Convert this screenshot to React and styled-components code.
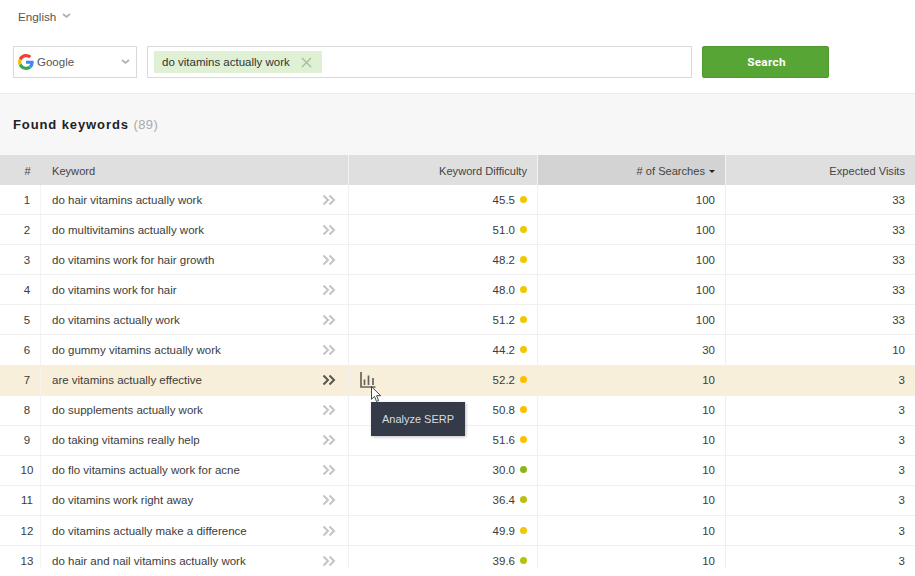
import React from 'react';
import styled, { createGlobalStyle } from 'styled-components';

const ROWS = [
  [1, 'do hair vitamins actually work', '45.5', 100, 33, 'y'],
  [2, 'do multivitamins actually work', '51.0', 100, 33, 'y'],
  [3, 'do vitamins work for hair growth', '48.2', 100, 33, 'y'],
  [4, 'do vitamins work for hair', '48.0', 100, 33, 'y'],
  [5, 'do vitamins actually work', '51.2', 100, 33, 'y'],
  [6, 'do gummy vitamins actually work', '44.2', 30, 10, 'y'],
  [7, 'are vitamins actually effective', '52.2', 10, 3, 'o'],
  [8, 'do supplements actually work', '50.8', 10, 3, 'o'],
  [9, 'do taking vitamins really help', '51.6', 10, 3, 'o'],
  [10, 'do flo vitamins actually work for acne', '30.0', 10, 3, 'g'],
  [11, 'do vitamins work right away', '36.4', 10, 3, 'l'],
  [12, 'do vitamins actually make a difference', '49.9', 10, 3, 'y'],
  [13, 'do hair and nail vitamins actually work', '39.6', 10, 3, 'l'],
];

const DOTS = { y: '#f0c800', o: '#fcc000', g: '#8fb31a', l: '#b8c010' };

function Chevron() {
  return (
    <svg width="9" height="6" viewBox="0 0 9 6">
      <path d="M1 1l3.5 3L8 1" fill="none" stroke="#b0b0b0" strokeWidth="1.7" />
    </svg>
  );
}

function GoogleLogo() {
  return (
    <svg width="16" height="16" viewBox="0 0 48 48">
      <path fill="#EA4335" d="M24 9.5c3.5 0 6.700 1.200 9.200 3.600l6.900-6.900C35.900 2.400 30.500 0 24 0 14.600 0 6.500 5.400 2.600 13.200l8 6.200C12.400 13.700 17.700 9.500 24 9.500z" />
      <path fill="#4285F4" d="M47 24.500c0-1.600-.1-3.100-.4-4.500H24v9h12.900c-.6 3-2.300 5.500-4.800 7.200l7.700 6C44.300 38 47 31.800 47 24.500z" />
      <path fill="#FBBC05" d="M10.600 28.600c-.5-1.400-.8-3-.8-4.600s.3-3.200.8-4.600l-8-6.200C.9 16.500 0 20.100 0 24s.9 7.500 2.600 10.800l8-6.200z" />
      <path fill="#34A853" d="M24 48c6.500 0 11.900-2.100 15.800-5.800l-7.700-6c-2.100 1.400-4.900 2.300-8.100 2.300-6.300 0-11.600-4.200-13.400-9.900l-8 6.200C6.500 42.600 14.600 48 24 48z" />
    </svg>
  );
}

function DoubleArrow({ active }) {
  return (
    <svg width="14" height="12" viewBox="0 0 14 12">
      <path
        d="M1.500 1.500L6 6l-4.500 4.500M7.500 1.500L12 6l-4.500 4.500"
        fill="none"
        stroke={active ? '#55544e' : '#c4c4c4'}
        strokeWidth="2"
      />
    </svg>
  );
}

function SerpIcon() {
  return (
    <svg width="16" height="16" viewBox="0 0 16 16">
      <path
        d="M1 0v15h14.500M4.500 7.500V13M8.500 3.500V13M13 6V13"
        fill="none"
        stroke="#66655c"
        strokeWidth="1.700"
      />
    </svg>
  );
}

function Cursor() {
  return (
    <svg width="11" height="17" viewBox="0 0 11 17">
      <path
        d="M.5.700v12.600l3-2.900 2 5 2.100-.9-2-4.800h4.100z"
        fill="#fff"
        stroke="#333"
        strokeWidth=".9"
      />
    </svg>
  );
}

function App() {
  return (
    <Page>
      <GlobalStyle />
      <TopArea>
        <LangPicker>
          English <Chevron />
        </LangPicker>
        <SearchRow>
          <EngineSelect>
            <GoogleLogo />
            <EngineName>Google</EngineName>
            <Chevron />
          </EngineSelect>
          <KeywordInput>
            <Tag>
              do vitamins actually work
              <svg width="11" height="11" viewBox="0 0 11 11">
                <path d="M1 1l9 9M10 1l-9 9" stroke="#a3c496" strokeWidth="1.500" />
              </svg>
            </Tag>
          </KeywordInput>
          <SearchButton>Search</SearchButton>
        </SearchRow>
      </TopArea>
      <Results>
        <Title>
          Found keywords <Count>(89)</Count>
        </Title>
        <HeaderRow>
          <HeadCell $center>#</HeadCell>
          <HeadCell>Keyword</HeadCell>
          <HeadCell $right>Keyword Difficulty</HeadCell>
          <HeadCell $right $sorted>
            # of Searches <SortCaret />
          </HeadCell>
          <HeadCell $right>Expected Visits</HeadCell>
        </HeaderRow>
        <Body>
          {ROWS.map(([n, keyword, kd, searches, visits, dot]) => {
            const active = n === 7;
            return (
              <Row key={n} $active={active}>
                <NumCell>{n}</NumCell>
                <KeywordCell>
                  {keyword}
                  <DoubleArrow active={active} />
                </KeywordCell>
                <DifficultyCell>
                  {active && (
                    <SerpButton>
                      <SerpIcon />
                      <CursorWrap>
                        <Cursor />
                      </CursorWrap>
                      <Tooltip>Analyze SERP</Tooltip>
                    </SerpButton>
                  )}
                  {kd}
                  <Dot $color={DOTS[dot]} />
                </DifficultyCell>
                <ValueCell>{searches}</ValueCell>
                <ValueCell>{visits}</ValueCell>
              </Row>
            );
          })}
        </Body>
      </Results>
    </Page>
  );
}

export default App;

const GlobalStyle = createGlobalStyle`
  html, body {
    margin: 0;
    background: #fff;
  }
  body {
    font-family: "Liberation Sans", Arial, sans-serif;
    font-size: 11.5px;
    color: #3c3c3c;
  }
`;

const COLUMNS = '41px 307px 189px 188px 1fr';

const Page = styled.div`
  width: 915px;
  height: 568px;
  overflow: hidden;
`;

const TopArea = styled.div`
  height: 94px;
  padding: 9px 13px 0;
  box-sizing: border-box;
  border-bottom: 1px solid #ebebeb;
`;

const LangPicker = styled.div`
  display: flex;
  align-items: center;
  gap: 6px;
  height: 14px;
  padding-left: 5px;
  color: #555;
  font-size: 11.7px;
`;

const SearchRow = styled.div`
  display: flex;
  margin-top: 23px;
  height: 32px;
`;

const EngineSelect = styled.div`
  display: flex;
  align-items: center;
  box-sizing: border-box;
  width: 124px;
  padding: 0 6px 0 4px;
  border: 1px solid #d9d9d9;
  color: #555;
`;

const EngineName = styled.span`
  flex: 1;
  margin-left: 3px;
`;

const KeywordInput = styled.div`
  display: flex;
  align-items: center;
  box-sizing: border-box;
  width: 545px;
  margin-left: 10px;
  padding-left: 6px;
  border: 1px solid #d9d9d9;
`;

const Tag = styled.div`
  display: flex;
  align-items: center;
  gap: 11px;
  width: 168px;
  box-sizing: border-box;
  height: 22px;
  padding: 0 8px;
  background: #dff0d4;
  color: #333;
  white-space: nowrap;
`;

const SearchButton = styled.button`
  width: 127px;
  margin-left: 10px;
  padding: 0 0 0 2px;
  border: 1px solid #4e9a30;
  border-radius: 2px;
  background: #57a535;
  color: #fff;
  font-family: Roboto, sans-serif;
  font-size: 11.8px;
  font-weight: 700;
  letter-spacing: 0.3px;
`;

const Results = styled.div`
  background: #f7f7f7;
`;

const Title = styled.div`
  height: 61px;
  padding: 23px 0 0 13px;
  box-sizing: border-box;
  color: #222;
  font-size: 13px;
  font-weight: 700;
  letter-spacing: 0.9px;
`;

const Count = styled.span`
  color: #aaa;
  font-weight: 400;
  letter-spacing: 0.4px;
`;

const HeaderRow = styled.div`
  display: grid;
  grid-template-columns: ${COLUMNS};
  height: 30px;
  background: #dfdfdf;
  font-size: 11.1px;
`;

const HeadCell = styled.div`
  display: flex;
  align-items: center;
  justify-content: ${(p) => (p.$center ? 'center' : p.$right ? 'flex-end' : 'flex-start')};
  gap: 4px;
  padding: ${(p) => (p.$center ? '2px 0 0 14px' : p.$right ? '2px 10px 0 0' : '2px 0 0 11px')};
  border-left: ${(p) => (p.$right ? '1px solid #f2f2f2' : '0')};
  background: ${(p) => (p.$sorted ? '#d3d3d3' : 'transparent')};
  color: #444;
`;

const SortCaret = styled.span`
  width: 0;
  height: 0;
  border-left: 3px solid transparent;
  border-right: 3px solid transparent;
  border-top: 3px solid #222;
`;

const Body = styled.div`
  background: #fff;
`;

const Row = styled.div`
  display: grid;
  grid-template-columns: ${COLUMNS};
  height: 30.1px;
  box-sizing: border-box;
  border-bottom: 1px solid #f0f0f0;
  background: ${(p) => (p.$active ? '#f7efd9' : '#fff')};
`;

const NumCell = styled.div`
  display: flex;
  align-items: center;
  justify-content: center;
  padding-left: 14px;
  border-right: 1px solid #f3f3f3;
`;

const KeywordCell = styled.div`
  display: flex;
  align-items: center;
  justify-content: space-between;
  padding: 0 12px 0 11px;
`;

const ValueCell = styled.div`
  display: flex;
  align-items: center;
  justify-content: flex-end;
  padding-right: 10px;
  border-left: 1px solid #f0f0f0;
`;

const DifficultyCell = styled(ValueCell)`
  position: relative;
`;

const Dot = styled.span`
  width: 7px;
  height: 7px;
  margin-left: 5px;
  margin-top: -1px;
  border-radius: 50%;
  background: ${(p) => p.$color};
`;

const SerpButton = styled.div`
  position: absolute;
  left: 11px;
  top: 6px;
  line-height: 0;
`;

const CursorWrap = styled.span`
  position: absolute;
  left: 11px;
  top: 14px;
  z-index: 3;
`;

const Tooltip = styled.div`
  position: absolute;
  left: 11px;
  top: 30px;
  z-index: 2;
  width: 94px;
  height: 34px;
  background: #343a47;
  box-shadow: 1px 1px 3px rgba(0, 0, 0, 0.25);
  color: #d8dce2;
  font-size: 11px;
  line-height: 34px;
  text-align: center;
`;
